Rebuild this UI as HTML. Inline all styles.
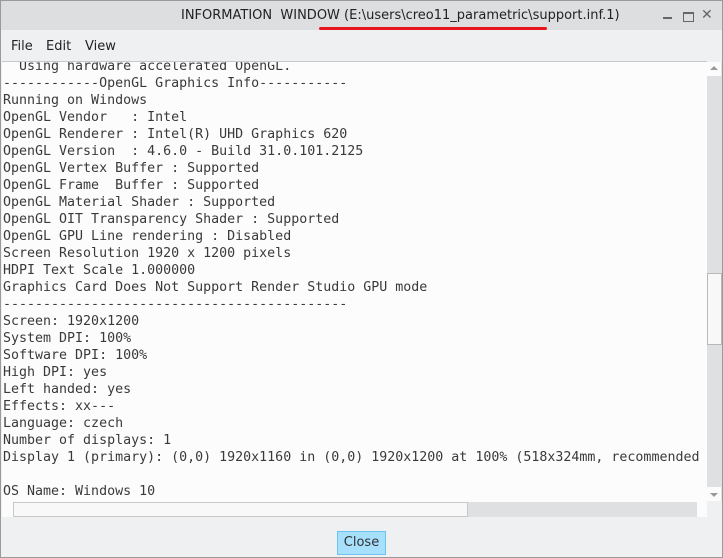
<!DOCTYPE html>
<html><head><style>
body{margin:0;width:723px;height:558px;overflow:hidden;background:#eff0f2;font-family:"DejaVu Sans","Liberation Sans",sans-serif;}
.win{position:absolute;left:0;top:0;width:721px;height:556px;border:1px solid #9a9a9a;background:#eff0f2;}
.title{position:absolute;left:0;top:0;width:721px;height:29px;background:#dcdedf;font-size:13px;color:#222;}
.title span{position:absolute;left:180px;top:7px;white-space:pre;}
.red{position:absolute;left:318px;top:26px;width:228px;height:3px;background:#e8141e;border-radius:2px;}
.menu{position:absolute;top:38px;font-size:13px;color:#222;}
.ta{position:absolute;left:1px;top:60px;width:705px;height:440px;background:#fcfcfc;border-top:1px solid #c8c8c8;overflow:hidden;}
pre{margin:0;position:absolute;left:1px;top:-4px;font-family:"DejaVu Sans Mono",monospace;font-size:13.3px;line-height:17px;color:#3a3a3a;}
.vs{position:absolute;left:706px;top:61px;width:15px;height:439px;background:#dfe0e2;}
.hs{position:absolute;left:1px;top:501px;width:705px;height:15px;background:#dfe0e2;}
</style></head><body><div class="win">
<div class="title"><span>INFORMATION  WINDOW (E:\users\creo11_parametric\support.inf.1)</span><div class="red"></div>
<div style="position:absolute;left:662px;top:16px;width:9px;height:2px;background:#666"></div>
<div style="position:absolute;left:682px;top:11px;width:9px;height:7px;border:1px solid #666;border-top-width:2px"></div>
<div style="position:absolute;left:700px;top:6px;font-size:14px;color:#666;font-weight:bold">✕</div>
</div>
<div class="menu" style="left:10px">File</div><div class="menu" style="left:45px">Edit</div><div class="menu" style="left:84px">View</div>
<div class="ta"><pre>  Using hardware accelerated OpenGL.
------------OpenGL Graphics Info-----------
Running on Windows
OpenGL Vendor   : Intel
OpenGL Renderer : Intel(R) UHD Graphics 620
OpenGL Version  : 4.6.0 - Build 31.0.101.2125
OpenGL Vertex Buffer : Supported
OpenGL Frame  Buffer : Supported
OpenGL Material Shader : Supported
OpenGL OIT Transparency Shader : Supported
OpenGL GPU Line rendering : Disabled
Screen Resolution 1920 x 1200 pixels
HDPI Text Scale 1.000000
Graphics Card Does Not Support Render Studio GPU mode
-------------------------------------------
Screen: 1920x1200
System DPI: 100%
Software DPI: 100%
High DPI: yes
Left handed: yes
Effects: xx---
Language: czech
Number of displays: 1
Display 1 (primary): (0,0) 1920x1160 in (0,0) 1920x1200 at 100% (518x324mm, recommended

OS Name: Windows 10</pre></div>
<div class="vs">
<div style="position:absolute;left:0;top:0;width:14px;height:14px;background:#fcfcfc"></div>
<div style="position:absolute;left:3px;top:4px;width:0;height:0;border-left:4px solid transparent;border-right:4px solid transparent;border-bottom:4px solid #999"></div>
<div style="position:absolute;left:0;top:211px;width:13px;height:70px;background:#f8f8f8;border:1px solid #b8b8b8"></div>
<div style="position:absolute;left:0;top:425px;width:14px;height:14px;background:#fcfcfc"></div>
<div style="position:absolute;left:3px;top:431px;width:0;height:0;border-left:4px solid transparent;border-right:4px solid transparent;border-top:4px solid #999"></div>
</div>
<div class="hs">
<div style="position:absolute;left:0;top:0;width:11px;height:15px;background:#fcfcfc"></div>
<div style="position:absolute;left:11px;top:0;width:453px;height:13px;background:#f8f8f8;border:1px solid #c8c8c8"></div>
<div style="position:absolute;left:695px;top:0;width:10px;height:15px;background:#fcfcfc"></div>
</div>
<div style="position:absolute;left:336px;top:530px;width:47px;height:22px;background:#a6e0fc;border:1px solid #6cc4ee;font-size:13px;color:#333;text-align:center;line-height:22px">Close</div>
</div></body></html>
